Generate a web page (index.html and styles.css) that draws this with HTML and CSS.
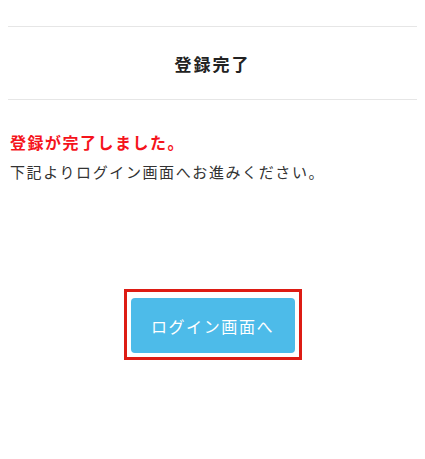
FILE: index.html
```html
<!DOCTYPE html>
<html lang="ja">
<head>
    <meta charset="UTF-8">
    <meta name="viewport" content="width=device-width, initial-scale=1.0">
    <title>登録完了</title>
    <link rel="stylesheet" href="styles.css">
</head>
<body>
    <div class="container">
        <div class="page-title">
            <h1>登録完了</h1>
        </div>
        <div class="message">
            <p class="done">登録が完了しました。</p>
            <p class="guide">下記よりログイン画面へお進みください。</p>
        </div>
        <div class="actions">
            <div class="btn-frame">
                <a href="#" class="btn">ログイン画面へ</a>
            </div>
        </div>
    </div>
</body>
</html>
```

FILE: styles.css
```css
html, body {
    margin: 0;
    padding: 0;
    background-color: #fff;
    font-family: "Noto Sans CJK JP", "Noto Sans", sans-serif;
    color: #333;
}
.container {
    padding: 26px 8px 0;
}
.page-title {
    border-top: 1px solid #e6e6e6;
    border-bottom: 1px solid #e6e6e6;
    height: 72px;
    display: flex;
    justify-content: center;
    align-items: center;
}
.page-title h1 {
    margin: 0;
    font-size: 17px;
    font-weight: 700;
    letter-spacing: 2px;
    color: #222;
}
.message {
    padding: 30px 2px 0;
}
.message p {
    margin: 0;
}
.done {
    color: #f5141c;
    font-size: 16px;
    font-weight: 700;
    letter-spacing: 1.5px;
    line-height: 24px;
}
.guide {
    margin-top: 6px !important;
    font-size: 15px;
    letter-spacing: 1.6px;
    line-height: 24px;
}
.actions {
    display: flex;
    justify-content: center;
    padding-top: 105px;
}
.btn-frame {
    border: 3px solid #dd1c14;
    padding: 6px 4px 4px 4px;
}
.btn {
    display: flex;
    justify-content: center;
    align-items: center;
    width: 164px;
    height: 55px;
    background-color: #4dbbe9;
    border-radius: 4px;
    color: #fff;
    font-size: 16px;
    letter-spacing: 1.6px;
    text-decoration: none;
}
```
